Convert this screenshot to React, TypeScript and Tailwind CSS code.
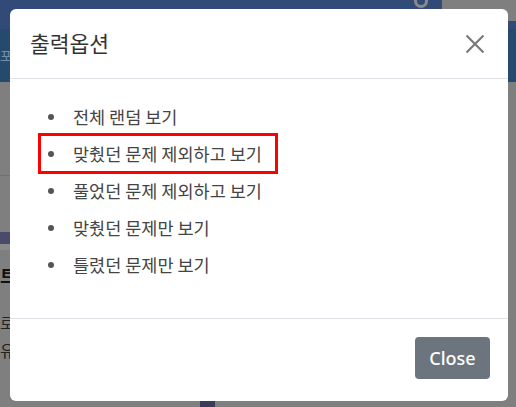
import React from 'react';

const options = [
  '전체 랜덤 보기',
  '맞췄던 문제 제외하고 보기',
  '풀었던 문제 제외하고 보기',
  '맞췄던 문제만 보기',
  '틀렸던 문제만 보기',
];

const selected = 1;

const OptionModal: React.FC = () => {
  return (
    <div className="absolute left-[10px] top-[9px] w-[498px] h-[392px] bg-white rounded-[6px] flex flex-col overflow-hidden">
      <div className="h-[70px] shrink-0 flex items-center justify-between pl-[20px] pr-[22px] border-b border-[#dee2e6]">
        <h5 className="text-[21.5px] text-[#333] leading-none pb-[2px]">출력옵션</h5>
        <button className="w-[22px] h-[22px] flex items-center justify-center text-[#7a7a7a]" aria-label="close">
          <svg width="20" height="20" viewBox="0 0 20 20" fill="none" stroke="currentColor" strokeWidth="2.2">
            <path d="M1.5 1.5 L18.5 18.5 M18.5 1.5 L1.5 18.5" />
          </svg>
        </button>
      </div>
      <div className="h-[240px] shrink-0 pt-[20px] pl-[31px] border-b border-[#dee2e6]">
        <ul className="flex flex-col gap-[2px]">
          {options.map((o, i) => (
            <li
              key={o}
              className={`h-[35px] w-fit flex items-center pl-[7px] pr-[13px] ${i === selected ? 'outline-[3px] outline-solid outline-[#ff0000]' : ''}`}
            >
              <span className="w-[6px] h-[6px] rounded-full bg-[#555] mr-[19px]" />
              <span className="text-[17.5px] text-[#444] leading-none">{o}</span>
            </li>
          ))}
        </ul>
      </div>
      <div className="flex-1 flex items-start justify-end pt-[18px] pr-[18px]">
        <button className="w-[75px] h-[42px] rounded-[4px] bg-[#6c757d] text-white text-[18px] font-medium font-['Noto_Sans',sans-serif]">
          Close
        </button>
      </div>
    </div>
  );
};

export default function App() {
  return (
    <div className="relative w-[516px] h-[407px] overflow-hidden bg-[#7f7f7f] font-['Noto_Sans_CJK_KR','Noto_Sans',sans-serif]">
      <div className="flex h-[21px]">
        <div className="w-[442px] bg-[#324a77] relative">
          <div className="absolute left-[414px] -top-[6px] w-[14px] h-[14px] rounded-full border-[3px] border-[#8a8a8a]" />
        </div>
        <div className="flex-1" />
      </div>
      <div className="h-[8px] bg-[#324a77]" />
      <div className="h-[53px] bg-[#254a6e] flex items-center">
        <span className="text-[14px] text-[#6d8fb0]">포</span>
      </div>
      <div className="h-[93px]" />
      <div className="h-px w-[10px] bg-[#6f6f6f]" />
      <div className="h-[56px]" />
      <div className="h-[12px] w-[10px] bg-[#4a4a6a]" />
      <div className="h-[6px] w-[10px] bg-[#8a8a8a]" />
      <div className="pt-[16px] text-[18px] font-bold text-[#111] leading-none">트</div>
      <div className="pt-[30px] text-[16px] text-[#222] leading-none">로</div>
      <div className="pt-[12px] text-[16px] text-[#222] leading-none">유기</div>
      <div className="absolute left-[200px] top-[392px] w-[15px] h-[15px] bg-[#3a3a5a]" />
      <OptionModal />
    </div>
  );
}
